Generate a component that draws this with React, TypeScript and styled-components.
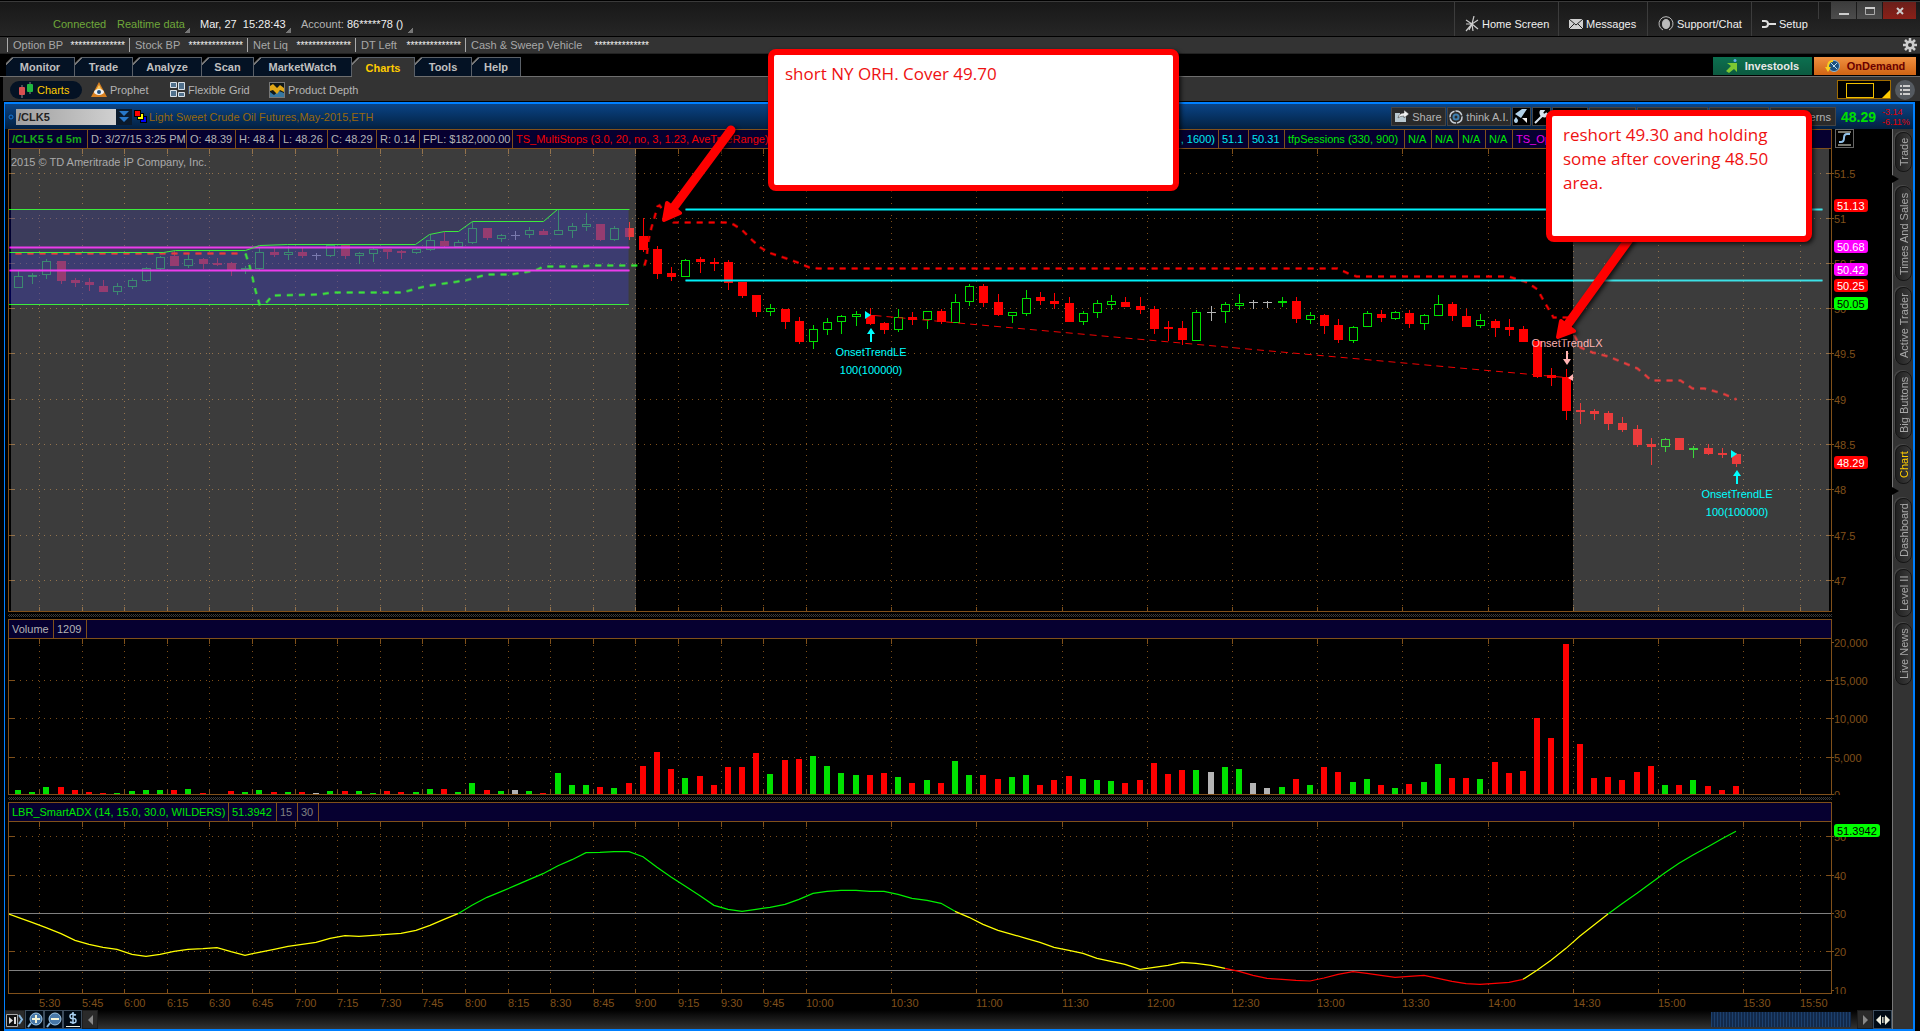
import React, { useLayoutEffect, useRef, useState } from "react";
import styled, { createGlobalStyle, css } from "styled-components";

const BROWN = "#80501a";
const BLUE = "#0080ff";
const SANS = '"Liberation Sans", Arial, sans-serif';

const Global = createGlobalStyle`
  * { box-sizing: border-box; }
  html, body { margin: 0; background: #000; }
  body { font: 11px/14px ${SANS}; color: #b4b4b4; overflow: hidden; }
  button, input { font: inherit; color: inherit; margin: 0; padding: 0; border: 0; background: none; border-radius: 0; }
  svg { display: block; flex: none; }
`;

/* ---------- market data ---------- */

type Kind = "g" | "r" | "w";
type Bar = { kind: Kind; top: number; bottom: number; high: number; low: number };

/* kind, body top, body bottom, high, low; levels are thirds of a unit below the base */
const parseBars = (base: number, text: string): Bar[] =>
  text
    .trim()
    .split(/\s+/)
    .map((item) => {
      const [top, bottom, high, low] = item
        .slice(1)
        .split(",")
        .map((v) => Math.round(base + Number(v) / 3));
      return { kind: item[0] as Kind, top, bottom, high, low };
    });

const bars: Bar[] = [
  ...parseBars(
    190,
    `g258,294,243,294 g255,260,249,282 g213,255,207,267 r213,273,213,282 r269,279,263,291 r276,286,264,303
     r288,306,270,306 g288,306,279,315 g270,291,264,297 g234,273,231,276 g201,237,198,240 r198,228,183,228
     g207,228,190,234 r207,222,203,238 r219,225,204,228 r219,241,216,258 g234,241,228,252 g186,237,170,240
     r186,195,171,201 g186,195,168,210 r186,198,172,204 w196,198,190,210 g165,198,165,201 r165,198,165,207
     g189,198,186,222 g177,192,174,216 r177,186,177,207 r183,189,180,207 g177,189,174,192 g150,180,135,183
     r153,169,126,170 g156,171,150,171 g114,159,96,162 r114,144,114,150 g135,147,132,156 w136,138,123,150
     g120,135,111,144 r123,135,117,135 g120,135,60,135 g108,123,99,144 g102,111,69,123 r102,150,102,153
     g114,150,108,153 r114,141,96,150 r138,180,85,185 r177,252,168,267 r249,262,231,273 g210,261,207,261
     r207,216,202,249 r216,222,204,243 r216,279,210,300 r276,318,276,324 r315,366,315,381 g354,366,342,378
     r357,396,357,417 r393,456,381,462 g417,456,405,477 g396,420,384,435 g378,396,375,432 g372,380,363,408
     r375,402,354,405 r399,420,396,432 g381,420,357,426 r381,390,366,405 g363,390,363,417 r363,396,357,402
     g336,399,312,399 g288,336,282,348 r288,339,282,351 r336,375,312,378 g366,378,366,399 g324,372,300,378
     r321,333,306,345 r333,342,309,357 r339,396,321,396 g369,396,363,405 g339,369,330,384 g333,345,315,360
     r336,351,321,351 r348,360,321,372 r357,417,348,432 r411,417,393,453 r414,450,393,465 g366,452,360,452
     w367,369,348,393 g342,366,336,399`
  ),
  ...parseBars(
    230,
    `g219,228,192,240 w217,219,210,237 w217,219,213,234 g214,218,201,231 r213,267,201,279 g255,270,246,282
     r255,288,252,312 r285,330,267,339 g291,333,288,339 g249,291,243,291 r252,264,240,276 g246,267,243,270
     r249,282,240,294 g255,282,252,300 g222,258,195,258 r222,258,216,273 r258,291,237,291 g270,288,252,294
     r273,294,267,321 r291,300,267,318 r297,336,288,336 r333,441,333,444 r435,444,414,468 r441,543,417,570
     r540,546,519,582 r543,552,537,570 r549,582,543,600 r579,600,561,606 r597,645,585,651 r642,651,624,705
     g627,651,624,666 r624,660,624,660 g654,660,648,684 r654,672,642,675 r669,675,654,684 r672,702,669,711`
  ),
];

/* bar heights, thirds of a unit */
const volumes = [
  13, 7, 22, 22, 13, 7, 4, 4, 10, 13, 13, 13, 16, 4, 0, 10, 7, 13, 7, 7, 7, 4, 10, 10, 10, 4, 10, 7, 7, 16, 16, 7, 34,
  13, 10, 13, 10, 4, 64, 28, 28, 22, 19, 34, 85, 127, 76, 49, 55, 28, 82, 82, 124, 61, 103, 106, 115, 85, 64, 58, 58,
  64, 52, 34, 43, 34, 100, 58, 58, 46, 52, 58, 28, 43, 55, 46, 43, 40, 34, 43, 94, 61, 73, 73, 67, 82, 76, 34, 19, 22,
  46, 28, 82, 67, 37, 46, 28, 19, 31, 37, 91, 49, 49, 46, 97, 64, 70, 229, 169, 451, 151, 49, 52, 43, 67, 85, 28, 28,
  43, 25, 13, 25,
];

/* thirds of a unit below 600 */
const adx = [
  952, 967, 983, 1001, 1021, 1033, 1042, 1048, 1063, 1069, 1063, 1054, 1048, 1046, 1043, 1055, 1066, 1057, 1048, 1039,
  1033, 1027, 1015, 1007, 1009, 1006, 1003, 1000, 991, 976, 958, 941, 916, 892, 875, 857, 839, 821, 797, 779, 758, 757,
  755, 755, 770, 802, 831, 858, 887, 916, 928, 934, 928, 922, 913, 898, 880, 874, 871, 871, 874, 874, 883, 895, 901,
  910, 934, 952, 973, 991, 1003, 1015, 1027, 1042, 1051, 1060, 1075, 1084, 1093, 1108, 1102, 1096, 1087, 1090, 1096,
  1105, 1114, 1126, 1135, 1138, 1141, 1143, 1134, 1123, 1115, 1120, 1126, 1132, 1129, 1126, 1135, 1144, 1151, 1153,
  1150, 1147, 1138, 1111, 1081, 1045, 1008, 975, 942, 911, 880, 849, 818, 790, 765, 740, 716, 694,
];

const barX = (i: number) => Math.round(18 + i * 14.198);

const times: [number, string][] = [
  [39, "5:30"], [82, "5:45"], [124, "6:00"], [167, "6:15"], [209, "6:30"], [252, "6:45"], [295, "7:00"], [337, "7:15"],
  [380, "7:30"], [422, "7:45"], [465, "8:00"], [508, "8:15"], [550, "8:30"], [593, "8:45"], [635, "9:00"], [678, "9:15"],
  [721, "9:30"], [763, "9:45"], [806, "10:00"], [891, "10:30"], [976, "11:00"], [1062, "11:30"], [1147, "12:00"],
  [1232, "12:30"], [1317, "13:00"], [1402, "13:30"], [1488, "14:00"], [1573, "14:30"], [1658, "15:00"], [1743, "15:30"],
  [1800, "15:50"],
];

const prices: [number, string][] = [
  [173, "51.5"], [218, "51"], [263, "50.5"], [308, "50"], [353, "49.5"], [399, "49"], [444, "48.5"], [489, "48"],
  [535, "47.5"], [580, "47"],
];
const volumeLevels: [number, string][] = [[642, "20,000"], [680, "15,000"], [718, "10,000"], [757, "5,000"], [794, "0"]];
const adxLevels: [number, string][] = [[836, "50"], [875, "40"], [913, "30"], [951, "20"], [990, "10"]];

/* ---------- plot plumbing ---------- */

type Scale = { w: number; h: number; X: (v: number) => number; Y: (v: number) => number };
type Domain = { x: number; y: number; w: number; h: number };

const Measured = styled.div`
  min-width: 0;
  min-height: 0;
  overflow: hidden;
`;

function Plot({ domain, label, children }: { domain: Domain; label: string; children: (s: Scale) => React.ReactNode }) {
  const ref = useRef<HTMLDivElement>(null);
  const [size, setSize] = useState({ w: domain.w, h: domain.h });
  useLayoutEffect(() => {
    const el = ref.current!;
    const measure = () => setSize({ w: el.clientWidth, h: el.clientHeight });
    measure();
    const ro = new ResizeObserver(measure);
    ro.observe(el);
    return () => ro.disconnect();
  }, []);
  const X = (v: number) => ((v - domain.x) * size.w) / domain.w;
  const Y = (v: number) => ((v - domain.y) * size.h) / domain.h;
  return (
    <Measured ref={ref}>
      <svg width={size.w} height={size.h} role="img" aria-label={label} fontFamily={SANS} fontSize={11}>
        {children({ ...size, X, Y })}
      </svg>
    </Measured>
  );
}

function Grid({ s, rows }: { s: Scale; rows: number[] }) {
  return (
    <g stroke={BROWN} shapeRendering="crispEdges">
      {times.map(([x]) => (
        <React.Fragment key={x}>
          <line x1={s.X(x) + 0.5} x2={s.X(x) + 0.5} y1={6} y2={s.h} strokeDasharray="1 5" />
          <line x1={s.X(x) + 0.5} x2={s.X(x) + 0.5} y1={0} y2={5} />
          <line x1={s.X(x) + 0.5} x2={s.X(x) + 0.5} y1={s.h - 4} y2={s.h} />
        </React.Fragment>
      ))}
      {rows.map((y) => (
        <React.Fragment key={y}>
          <line x1={5} x2={s.w} y1={s.Y(y) + 0.5} y2={s.Y(y) + 0.5} strokeDasharray="1 5" />
          <line x1={0} x2={5} y1={s.Y(y) + 0.5} y2={s.Y(y) + 0.5} />
          <line x1={s.w - 4} x2={s.w} y1={s.Y(y) + 0.5} y2={s.Y(y) + 0.5} />
        </React.Fragment>
      ))}
    </g>
  );
}

const points = (s: Scale, list: number[][], shift = 0) =>
  list.map(([x, y]) => `${s.X(x) + shift},${s.Y(y) + shift}`).join(" ");

function Glow({ s, list, color, dash }: { s: Scale; list: number[][]; color: string; dash?: string }) {
  const p = points(s, list, 0.5);
  return (
    <g fill="none" stroke={color} strokeDasharray={dash}>
      <polyline points={p} strokeWidth={3} opacity={0.5} />
      <polyline points={p} strokeWidth={dash ? 1.5 : 1} />
    </g>
  );
}

const kindColor: Record<Kind, string> = { g: "#00e000", r: "#ff0000", w: "#b4b4b4" };

const rangeTop = [
  [9, 252], [163, 252], [175, 250], [245, 250], [259, 245], [287, 244], [415, 244], [429, 234], [444, 231], [458, 231],
  [472, 221], [543, 221], [557, 209], [629, 209],
];
const greenStop = [
  [245, 253], [249, 265], [252, 277], [255, 290], [259, 304], [265, 303], [272, 295], [320, 294], [331, 292], [402, 292],
  [416, 288], [429, 285], [444, 283], [465, 280], [486, 274], [510, 274], [535, 270], [543, 266], [580, 266], [592, 265],
  [643, 265],
];
const redStop = [
  [644, 265], [646, 258], [648, 240], [651, 227], [654, 217], [657, 206], [659, 205], [663, 210], [673, 222], [725, 222],
  [733, 224], [741, 229], [752, 240], [760, 247], [768, 252], [786, 258], [797, 262], [809, 267], [818, 268], [1337, 268],
  [1348, 273], [1356, 276], [1508, 276], [1527, 282], [1537, 289], [1543, 300], [1549, 310], [1553, 317], [1567, 317],
  [1573, 333], [1580, 347], [1592, 352], [1608, 356], [1637, 368], [1651, 380], [1680, 380], [1692, 388], [1704, 388],
  [1722, 393], [1736, 399],
];

const Watermark = styled.text`
  fill: #a0a0a0;
`;

function Signal({ s, x, y, color, down, lines }: { s: Scale; x: number; y: number; color: string; down?: boolean; lines: [number, string][] }) {
  const cx = s.X(x);
  const cy = s.Y(y);
  return (
    <g fill={color} textAnchor="middle">
      <path d={down ? `M${cx - 1} ${cy}h2v8h3l-4 6l-4-6h3z` : `M${cx} ${cy}l4 6h-3v8h-2v-8h-3z`} />
      {lines.map(([ly, t]) => (
        <text key={t} x={cx} y={s.Y(ly)}>
          {t}
        </text>
      ))}
    </g>
  );
}

function PricePlot() {
  return (
    <Plot domain={{ x: 9, y: 149, w: 1822, h: 462 }} label="Price">
      {(s) => (
        <>
          <Grid s={s} rows={prices.map(([y]) => y)} />
          <Watermark x={2} y={17}>
            2015 © TD Ameritrade IP Company, Inc.
          </Watermark>
          <g shapeRendering="crispEdges">
            {bars.map((b, i) => {
              const x = s.X(barX(i));
              const top = s.Y(b.top);
              const h = Math.max(1, s.Y(b.bottom) - top);
              const c = kindColor[b.kind];
              return (
                <g key={i} fill={c}>
                  <rect x={x} y={s.Y(b.high)} width={1} height={Math.max(1, s.Y(b.low) - s.Y(b.high))} />
                  {b.kind === "g" ? (
                    <rect x={x - 4 + 0.5} y={top + 0.5} width={8} height={Math.max(1, h - 1)} fill="#000" stroke={c} />
                  ) : (
                    <rect x={x - 4} y={top} width={9} height={b.kind === "w" ? 1 : Math.max(2, h)} />
                  )}
                </g>
              );
            })}
          </g>
          <rect x={0} y={s.Y(209)} width={s.X(628)} height={s.Y(304) - s.Y(209)} fill="#00009b" opacity={0.3} />
          <polygon points={`${points(s, rangeTop)} ${points(s, [[629, 304], [9, 304]])}`} fill="#00009b" opacity={0.27} />
          <polyline
            points={points(s, [[874, 315], [1565, 377]], 0.5)}
            stroke="#f00000"
            strokeDasharray="7 5"
            fill="none"
          />
          <Glow s={s} list={[[15, 253], [241, 253]]} color="#ff0000" dash="6 6" />
          <Glow s={s} list={greenStop} color="#00f000" dash="6 6" />
          <Glow s={s} list={redStop} color="#f80000" dash="6 6" />
          <Glow s={s} list={[[9, 247], [629, 247]]} color="#ff00ff" />
          <Glow s={s} list={[[9, 270], [629, 270]]} color="#ff00ff" />
          <Glow s={s} list={[[685, 209], [1822, 209]]} color="#00f0f8" />
          <Glow s={s} list={[[685, 280], [1822, 280]]} color="#00f0f8" />
          <polyline points={points(s, rangeTop, 0.5)} fill="none" stroke="#00ff00" />
          <g fill="#00ff00" shapeRendering="crispEdges">
            <rect x={0} y={s.Y(209)} width={s.X(629)} height={1} />
            <rect x={0} y={s.Y(304)} width={s.X(629)} height={1} />
          </g>
          <g fill="rgba(191,191,191,.314)" shapeRendering="crispEdges">
            <rect x={s.X(11)} y={0} width={s.X(636) - s.X(11)} height={s.h} />
            <rect x={s.X(1573)} y={0} width={s.X(1829) - s.X(1573)} height={s.h} />
          </g>
          <path d={`M${s.X(865)} ${s.Y(311)}l6 4l-6 4z`} fill="#00ffff" />
          <path d={`M${s.X(1731)} ${s.Y(450)}l6 4l-6 4z`} fill="#00ffff" />
          <path d={`M${s.X(1573)} ${s.Y(374)}v7l-5-3z`} fill="#ffb4b4" />
          <Signal s={s} x={871} y={328} color="#00ffff" lines={[[356, "OnsetTrendLE"], [374, "100(100000)"]]} />
          <Signal s={s} x={1737} y={470} color="#00ffff" lines={[[498, "OnsetTrendLE"], [516, "100(100000)"]]} />
          <Signal s={s} x={1567} y={351} color="#ffb4b4" down lines={[[347, "OnsetTrendLX"]]} />
        </>
      )}
    </Plot>
  );
}

function VolumePlot() {
  return (
    <Plot domain={{ x: 9, y: 639, w: 1822, h: 155 }} label="Volume">
      {(s) => (
        <>
          <Grid s={s} rows={[680, 718, 757]} />
          <g shapeRendering="crispEdges">
            {volumes.map((v, i) => {
              const h = (Math.round(v / 3) * s.h) / 155;
              return <rect key={i} x={s.X(barX(i)) - 3} y={s.h - h} width={6} height={h} fill={kindColor[bars[i].kind]} />;
            })}
          </g>
        </>
      )}
    </Plot>
  );
}

function AdxPlot() {
  const all = adx.map((v, i) => [barX(i), 600 + v / 3]);
  const run = (a: number, b: number) => all.slice(a, b + 1);
  return (
    <Plot domain={{ x: 9, y: 822, w: 1822, h: 171 }} label="LBR SmartADX">
      {(s) => (
        <>
          <Grid s={s} rows={[836, 875, 951]} />
          <g fill="#808080" shapeRendering="crispEdges">
            <rect x={0} y={s.Y(913)} width={s.w} height={1} />
            <rect x={0} y={s.Y(970)} width={s.w} height={1} />
          </g>
          <g fill="none" strokeWidth={1.2}>
            <polyline points={points(s, [[9, 914], ...run(0, 31)])} stroke="#ffff00" />
            <polyline points={points(s, run(31, 66))} stroke="#00f000" />
            <polyline points={points(s, run(66, 85))} stroke="#ffff00" />
            <polyline points={points(s, run(85, 106))} stroke="#ff0000" />
            <polyline points={points(s, run(106, 112))} stroke="#ffff00" />
            <polyline points={points(s, run(112, 121))} stroke="#00f000" />
          </g>
        </>
      )}
    </Plot>
  );
}

type Badge = { y: number; text: string; color: string; dark?: boolean };

function AxisPlot({ y, h, labels, badges = [] }: { y: number; h: number; labels: [number, string][]; badges?: Badge[] }) {
  return (
    <Plot domain={{ x: 1832, y, w: 60, h }} label="Scale">
      {(s) => (
        <>
          {labels.map(([ly, t]) => (
            <g key={t} fill={BROWN}>
              <rect x={0} y={s.Y(ly)} width={2} height={1} />
              <text x={2} y={s.Y(ly) + 5}>
                {t}
              </text>
            </g>
          ))}
          {badges.map((b) => (
            <g key={b.text}>
              <rect x={2} y={s.Y(b.y) - 7} width={b.text.length > 5 ? 46 : 34} height={13} rx={3} fill={b.color} />
              <text x={5} y={s.Y(b.y) + 4} fill={b.dark ? "#000" : "#fff"}>
                {b.text}
              </text>
            </g>
          ))}
        </>
      )}
    </Plot>
  );
}

/* ---------- page frame ---------- */

const Page = styled.div`
  position: relative;
  display: flex;
  flex-direction: column;
  height: 100vh;
  min-height: 700px;
  background: #000;
`;

const TitleBar = styled.header`
  display: flex;
  justify-content: space-between;
  height: 36px;
  flex: none;
  margin-top: 1px;
  padding: 0 4px 0 53px;
  border-top: 1px solid #3a3a3a;
  border-bottom: 1px solid #000;
  background: linear-gradient(#181818, #262626);
`;

const Status = styled.div`
  display: flex;
  align-items: center;
  padding-top: 10px;
`;

const StatusText = styled.span<{ $color: string; $w: number }>`
  width: ${(p) => p.$w}px;
  color: ${(p) => p.$color};
  white-space: nowrap;
`;

const Corner = styled.i`
  width: 5px;
  height: 5px;
  margin: 12px 10px 0 2px;
  background: linear-gradient(135deg, transparent 50%, #777 50%);
`;

const TitleRight = styled.div`
  display: flex;
  align-items: flex-start;
`;

const TitleLink = styled.button<{ $w: number }>`
  display: flex;
  align-items: center;
  gap: 3px;
  width: ${(p) => p.$w}px;
  height: 34px;
  padding: 10px 0 0 10px;
  border-left: 1px solid #3c3c3c;
  color: #f0f0f0;
  white-space: nowrap;
`;

const WindowButtons = styled.div`
  display: flex;
  gap: 1px;
  padding-left: 12px;
  border-left: 1px solid #3c3c3c;
`;

const WindowButton = styled.button<{ $close?: boolean }>`
  display: grid;
  place-items: center;
  width: ${(p) => (p.$close ? 33 : 25)}px;
  height: 17px;
  background: ${(p) => (p.$close ? "linear-gradient(#6a1f1a,#8a2018)" : "linear-gradient(#3c3c3c,#4c4c4c)")};
`;

const AccountBar = styled.div`
  display: flex;
  align-items: center;
  height: 17px;
  flex: none;
  padding: 0 3px 0 7px;
  background: #333;
  border-bottom: 1px solid #222;
`;

const AccountItem = styled.div<{ $w: number }>`
  display: flex;
  justify-content: space-between;
  width: ${(p) => p.$w}px;
  height: 14px;
  padding: 0 4px 0 5px;
  border-left: 1px solid #aaa;
  color: #a8a8a8;
  white-space: nowrap;
`;

const Stars = styled.span`
  font-size: 10px;
  line-height: 16px;
  color: #f0f0f0;
`;

const IconButton = styled.button`
  display: grid;
  place-items: center;
`;

const Push = styled.div`
  flex: 1;
`;

const TabRow = styled.nav`
  display: flex;
  align-items: flex-end;
  height: 23px;
  flex: none;
  padding: 0 4px 0 6px;
  border-bottom: 1px solid #6e6e6e;
`;

const Tab = styled.button<{ $w: number; $active?: boolean }>`
  width: ${(p) => p.$w}px;
  height: ${(p) => (p.$active ? 20 : 19)}px;
  margin-bottom: ${(p) => (p.$active ? -1 : 0)}px;
  border-top: 1px solid #5a6068;
  border-right: 1px solid #5a6068;
  background: linear-gradient(135deg, #777 5px, ${(p) => (p.$active ? "#333" : "#041224")} 5px);
  clip-path: polygon(6px 0, 100% 0, 100% 100%, 0 100%, 0 6px);
  color: ${(p) => (p.$active ? "#ffcc00" : "#c0c0c0")};
  font-weight: bold;
  text-align: center;
`;

const Promo = styled.button<{ $w: number; $orange?: boolean }>`
  display: flex;
  align-items: center;
  justify-content: center;
  gap: 7px;
  width: ${(p) => p.$w}px;
  height: 18px;
  margin: 0 0 1px 2px;
  font-weight: bold;
  ${(p) =>
    p.$orange
      ? css`
          color: #6a0000;
          background: linear-gradient(#f09040, #d06414);
        `
      : css`
          color: #e8e8e8;
          background: linear-gradient(#0c7050, #0c5a40);
        `}
`;

const SubNav = styled.nav`
  display: flex;
  align-items: center;
  height: 25px;
  flex: none;
  margin-left: 3px;
  padding: 1px 5px 0 7px;
  background: #333;
  border-bottom: 1px solid #000;
`;

const SubLink = styled.button<{ $w: number; $active?: boolean }>`
  display: flex;
  align-items: center;
  gap: 3px;
  width: ${(p) => p.$w}px;
  height: 18px;
  padding-left: 9px;
  border-radius: 9px;
  background: ${(p) => (p.$active ? "#041224" : "none")};
  color: ${(p) => (p.$active ? "#ffcc00" : "#b4b4b4")};
  white-space: nowrap;
`;

const LayoutButton = styled.button`
  width: 54px;
  height: 19px;
  border: 1px solid #a06c00;
  background: #000;
`;

const ListButton = styled.button`
  display: grid;
  place-items: center;
  width: 20px;
  height: 20px;
  margin-left: 4px;
  border-radius: 50%;
  background: #555a60;
`;

const Workspace = styled.main`
  display: flex;
  flex-direction: column;
  flex: 1;
  min-height: 0;
  margin: 0 5px 0 4px;
  border: solid ${BLUE};
  border-width: 2px 2px 2px 1px;
`;

const SymbolBar = styled.div`
  display: flex;
  align-items: center;
  height: 25px;
  flex: none;
  padding-left: 3px;
  background: linear-gradient(#0a4486, #032040);
`;

const SymbolInput = styled.input`
  width: 100px;
  height: 16px;
  padding-left: 2px;
  background: linear-gradient(90deg, #a0a0a0, #d0d0d0);
  color: #222;
  font-weight: bold;
`;

const DropButton = styled.button`
  display: grid;
  place-items: center;
  width: 16px;
  height: 16px;
  margin-right: 2px;
  background: #0a1a2c;
`;

const SymbolName = styled.h1`
  margin: 0 0 0 2px;
  color: #98680c;
  font: inherit;
  white-space: nowrap;
`;

const Tool = styled.button<{ $w: number; $dark?: boolean }>`
  display: flex;
  align-items: center;
  justify-content: center;
  gap: 3px;
  width: ${(p) => p.$w}px;
  height: 19px;
  margin-left: 1px;
  border: 1px solid #444;
  background: ${(p) => (p.$dark ? "#000" : "#2a2a2a")};
  color: #b4b4b4;
  white-space: nowrap;
`;

const LastPrice = styled.strong`
  margin-left: 5px;
  color: #00e000;
  font-size: 14px;
`;

const Change = styled.span`
  width: 30px;
  margin: 0 1px 0 6px;
  color: #e00000;
  font-size: 9px;
  line-height: 10px;
`;

const Body = styled.div`
  display: flex;
  flex: 1;
  min-height: 0;
`;

const Charts = styled.div`
  display: flex;
  flex-direction: column;
  flex: 1;
  min-width: 0;
  padding-left: 3px;
`;

const Panel = styled.section<{ $grow: number }>`
  display: grid;
  grid-template: 20px minmax(0, 1fr) / minmax(0, 1fr) 60px;
  flex: ${(p) => p.$grow} 1 ${(p) => p.$grow}px;
  min-height: 0;
`;

const PanelHead = styled.div`
  display: flex;
  overflow: hidden;
  border: 1px solid ${BROWN};
  background: #060030;
`;

const Cell = styled.span<{ $w?: number; $color?: string; $bold?: boolean; $end?: boolean }>`
  width: ${(p) => (p.$w ? `${p.$w}px` : "auto")};
  flex: ${(p) => (p.$w ? "none" : "1")};
  padding: 2px 3px;
  border-right: ${(p) => (p.$w ? `1px solid ${BROWN}` : "0")};
  color: ${(p) => p.$color || "#b4b4b4"};
  font-weight: ${(p) => (p.$bold ? "bold" : "normal")};
  text-align: ${(p) => (p.$end ? "right" : "left")};
  white-space: nowrap;
`;

const Frame = styled.div`
  display: grid;
  min-height: 0;
  border: solid ${BROWN};
  border-width: 0 1px 1px;
`;

const AxisCell = styled.div`
  display: grid;
  min-height: 0;
`;

const FitButton = styled.button`
  display: grid;
  place-items: center;
  width: 19px;
  height: 19px;
  margin-left: 3px;
  border: 1px solid #666;
`;

const Splitter = styled.div`
  height: 7px;
  flex: none;
  margin: 0 60px 0 0;
  padding: 2px 0;
  background: repeating-conic-gradient(#3a3a3a 0 25%, #000 0 50%) 0 0 / 2px 2px content-box;
`;

const TimeAxis = styled.div`
  display: grid;
  height: 16px;
  flex: none;
  margin: 0 61px 0 1px;
`;

const BottomBar = styled.div`
  display: flex;
  height: 19px;
  flex: none;
  margin-left: -3px;
  background: linear-gradient(#000, #333);
`;

const BottomButton = styled.button<{ $w: number; $line?: boolean }>`
  display: grid;
  place-items: center;
  width: ${(p) => p.$w}px;
  height: 19px;
  flex: none;
  border: 1px solid ${(p) => (p.$line ? "#3c4c5c" : "#1c1c1c")};
  background: ${(p) => (p.$line ? "#000a14" : "#2a2a2a")};
`;

const Track = styled.div`
  display: flex;
  justify-content: flex-end;
  flex: 1;
  padding: 2px 6px 2px 0;
`;

const Thumb = styled.div`
  width: 140px;
  background: repeating-linear-gradient(90deg, #1c406e 0 1px, #12294a 1px 3px);
`;

const SideBar = styled.aside`
  display: flex;
  flex-direction: column;
  align-items: center;
  gap: 6px;
  width: 21px;
  flex: none;
  padding-top: 3px;
  border-left: 1px solid #777;
  background: #333;
`;

const SideTab = styled.button<{ $h: number; $active?: boolean; $gap?: boolean }>`
  width: 17px;
  height: ${(p) => p.$h}px;
  flex: none;
  border: 1px solid #161616;
  border-radius: 8px;
  background: linear-gradient(90deg, #3c3c3c, #202020);
  box-shadow: 1px 1px 0 #484848;
  color: ${(p) => (p.$active ? "#ffcc00" : "#a8a8a8")};
  line-height: 14px;
  writing-mode: vertical-rl;
  rotate: 180deg;
  white-space: nowrap;
  text-align: center;
`;

const Notch = styled.i`
  align-self: flex-start;
  width: 7px;
  height: 8px;
  margin: -3px 0 -3px -1px;
  background: #000;
  clip-path: polygon(0 0, 100% 50%, 0 100%);
`;

const Note = styled.div<{ $x: number; $y: number; $w: number; $h: number }>`
  position: absolute;
  left: ${(p) => p.$x}px;
  top: ${(p) => p.$y}px;
  width: ${(p) => p.$w}px;
  height: ${(p) => p.$h}px;
  padding: 7px 11px;
  border: 6px solid #ff0000;
  border-radius: 8px;
  background: #fff;
  box-shadow: 2px 2px 4px rgba(0, 0, 0, 0.7);
  color: #ee1111;
  font: 17px/24px "Open Sans", "Noto Sans", sans-serif;
`;

const Arrows = styled.svg`
  position: absolute;
  left: 0;
  top: 0;
  pointer-events: none;
  filter: drop-shadow(2px 2px 2px rgba(0, 0, 0, 0.7));
`;

const accounts: [string, number][] = [
  ["Option BP", 122], ["Stock BP", 118], ["Net Liq", 108], ["DT Left", 110], ["Cash & Sweep Vehicle", 188],
];
const tabs: [string, number][] = [
  ["Monitor", 69], ["Trade", 58], ["Analyze", 69], ["Scan", 52], ["MarketWatch", 98], ["Charts", 63], ["Tools", 57], ["Help", 49],
];
const sideTabs: [string, number, boolean?][] = [
  ["Trade", 40, true], ["Times And Sales", 95], ["Active Trader", 78], ["Big Buttons", 68], ["Chart", 39, true],
  ["Dashboard", 65], ["Level II", 48], ["Live News", 62],
];

const Zoom = ({ plus }: { plus?: boolean }) => (
  <svg width="16" height="16" viewBox="0 0 16 16">
    <path d="M4 11L1 15" stroke="#88b8e0" strokeWidth="2" />
    <circle cx="9" cy="7" r="6" fill="#4878a8" stroke="#a0c8e8" />
    <path d={plus ? "M5 7h8M9 3v8" : "M5 7h8"} stroke="#f4f4d8" strokeWidth="2" />
  </svg>
);

export default function App() {
  return (
    <>
      <Global />
      <Page>
        <TitleBar>
          <Status>
            <StatusText $color="#6fa83a" $w={64}>Connected</StatusText>
            <StatusText $color="#6fa83a" $w={66}>Realtime data</StatusText>
            <Corner />
            <StatusText $color="#f0f0f0" $w={84}>Mar, 27&nbsp; 15:28:43</StatusText>
            <Corner />
            <StatusText $color="#b4b4b4" $w={46}>Account:</StatusText>
            <StatusText $color="#f0f0f0" $w={59}>86*****78 ()</StatusText>
            <Corner />
          </Status>
          <TitleRight>
            <TitleLink $w={104}>
              <svg width="14" height="16" viewBox="0 0 14 16" stroke="#ccc" strokeWidth="1.2">
                <path d="M9 0L7 8L13 4M7 8L1 4M7 8L1 15M7 8L8 15M7 8L13 13M7 8H1M7 8L4 14" fill="none" />
              </svg>
              Home Screen
            </TitleLink>
            <TitleLink $w={89}>
              <svg width="14" height="10" viewBox="0 0 14 10">
                <path d="M0 0H14V10H0z" fill="#d0d0d0" />
                <path d="M0 0L7 6L14 0M0 10L5 5M14 10L9 5" stroke="#222" fill="none" />
              </svg>
              Messages
            </TitleLink>
            <TitleLink $w={104}>
              <svg width="16" height="16" viewBox="0 0 16 16" fill="none" stroke="#bbb">
                <ellipse cx="8" cy="8" rx="3.500" ry="4.500" fill="#bbb" />
                <path d="M5 14A7 7 0 1 1 11 14" />
              </svg>
              Support/Chat
            </TitleLink>
            <TitleLink $w={67}>
              <svg width="14" height="8" viewBox="0 0 14 8" fill="none" stroke="#ddd" strokeWidth="2">
                <path d="M0 1h3q3 0 3 3t-3 3H0M6 4h8" />
              </svg>
              Setup
            </TitleLink>
            <WindowButtons>
              <WindowButton aria-label="Minimize">
                <svg width="10" height="8"><path d="M0 6h10v2H0z" fill="#ccc" /></svg>
              </WindowButton>
              <WindowButton aria-label="Maximize">
                <svg width="10" height="8"><path d="M.5 1.5h9v6h-9z" fill="none" stroke="#aaa" /><path d="M0 0h10v2H0z" fill="#ccc" /></svg>
              </WindowButton>
              <WindowButton aria-label="Close" $close>
                <svg width="8" height="8"><path d="M1 1l6 6M7 1l-6 6" stroke="#ccc" strokeWidth="2" /></svg>
              </WindowButton>
            </WindowButtons>
          </TitleRight>
        </TitleBar>

        <AccountBar>
          {accounts.map(([name, w]) => (
            <AccountItem key={name} $w={w}>
              {name} <Stars>**************</Stars>
            </AccountItem>
          ))}
          <Push />
          <IconButton aria-label="Settings">
            <svg width="14" height="14" viewBox="0 0 14 14">
              <g stroke="#ccc" strokeWidth="2.500"><path d="M7 0v14M0 7h14M2 2l10 10M12 2L2 12" /></g>
              <circle cx="7" cy="7" r="4.500" fill="#ccc" />
              <circle cx="7" cy="7" r="2" fill="#333" />
            </svg>
          </IconButton>
        </AccountBar>

        <TabRow>
          {tabs.map(([name, w]) => (
            <Tab key={name} $w={w} $active={name === "Charts"}>{name}</Tab>
          ))}
          <Push />
          <Promo $w={99}>
            <svg width="12" height="14" viewBox="0 0 12 14">
              <path d="M1 4h10v9L8 10L3 14L0 12L5 7z" fill="#7cc832" />
              <circle cx="9" cy="1.500" r="1.500" fill="#60b0f0" />
            </svg>
            Investools
          </Promo>
          <Promo $w={102} $orange>
            <svg width="15" height="14" viewBox="0 0 15 14">
              <circle cx="9" cy="7" r="5.500" fill="#1c5080" stroke="#90b8d0" />
              <path d="M6 4l6 6M12 4L8 8" stroke="#c0e0f0" />
              <path d="M8 2Q3 2 3 8" stroke="#f8d020" strokeWidth="2" fill="none" />
              <path d="M0 8h6l-3 5z" fill="#f8d020" />
            </svg>
            OnDemand
          </Promo>
        </TabRow>

        <SubNav>
          <SubLink $w={72} $active>
            <svg width="15" height="16" viewBox="0 0 15 16">
              <path d="M3 3v13M11 0v12" stroke="#888" />
              <rect x="0" y="5" width="6" height="8" rx="1" fill="#d85050" />
              <rect x="8" y="2" width="6" height="8" rx="1" fill="#20b840" />
            </svg>
            Charts
          </SubLink>
          <SubLink $w={79}>
            <svg width="16" height="16" viewBox="0 0 16 16">
              <path d="M8 0L16 15H0z" fill="#d88020" />
              <path d="M8 3l3 5H5z" fill="#f8c860" />
              <ellipse cx="8" cy="10" rx="5" ry="3" fill="#f0f0f0" />
              <circle cx="8" cy="10" r="2" fill="#205080" />
            </svg>
            Prophet
          </SubLink>
          <SubLink $w={99}>
            <svg width="15" height="15" viewBox="0 0 15 15" fill="#50708c" stroke="#d8e0e8">
              <path d="M.5.5h6v5h-6zM.5 8.5h6v6h-6zM8.5.5h6v7h-6zM8.5 10.5h6v4h-6z" />
            </svg>
            Flexible Grid
          </SubLink>
          <SubLink $w={110}>
            <svg width="16" height="16" viewBox="0 0 16 16">
              <rect x=".5" y=".5" width="15" height="15" fill="#101818" stroke="#777" />
              <path d="M1 10l4 3l5-4l5 2v4H1z" fill="#3878a0" />
              <path d="M1 4l3-2l4 4l3-3l4 3v4l-4-2l-3 4l-4-4l-3 1z" fill="#e0a818" />
            </svg>
            Product Depth
          </SubLink>
          <Push />
          <LayoutButton aria-label="Grid layout">
            <svg width="52" height="17" viewBox="0 0 52 17">
              <rect x="8.500" y="2.500" width="27" height="14" fill="none" stroke="#f0c000" />
              <path d="M52 9v8h-8z" fill="#ffcc00" />
            </svg>
          </LayoutButton>
          <ListButton aria-label="List">
            <svg width="10" height="10" viewBox="0 0 10 10" fill="#ccc">
              <path d="M0 0h2v2H0zM3 0h7v2H3zM0 4h2v2H0zM3 4h7v2H3zM0 8h2v2H0zM3 8h7v2H3z" />
            </svg>
          </ListButton>
        </SubNav>

        <Workspace>
          <SymbolBar>
            <svg width="8" height="8" viewBox="0 0 8 8"><circle cx="3" cy="4" r="2" fill="none" stroke="#1878d8" /></svg>
            <SymbolInput aria-label="Symbol" defaultValue="/CLK5" />
            <DropButton aria-label="Choose symbol">
              <svg width="10" height="12" viewBox="0 0 10 12" fill="#2878c8"><path d="M0 0h10L5 5zM0 6h10l-5 5z" /></svg>
            </DropButton>
            <svg width="13" height="13" viewBox="0 0 13 13" stroke="#000">
              <rect x="6.500" y="6.500" width="6" height="6" fill="#00f" />
              <rect x="3.500" y="3.500" width="6" height="6" fill="#ff0" />
              <rect x=".5" y=".5" width="6" height="6" fill="#f00" />
            </svg>
            <SymbolName>Light Sweet Crude Oil Futures,May-2015,ETH</SymbolName>
            <Push />
            <Tool $w={55}>
              <svg width="14" height="14" viewBox="0 0 14 14">
                <path d="M0 3h5v2H11v7H0z" fill="#b8c8d0" />
                <path d="M3 8Q4 3 9 3V0l5 4l-5 4V6Q5 6 3 8z" fill="#f0f0f0" stroke="#333" strokeWidth=".5" />
              </svg>
              Share
            </Tool>
            <Tool $w={64}>
              <svg width="14" height="14" viewBox="0 0 14 14" fill="none" stroke="#c8d0d8">
                <circle cx="7" cy="7" r="6" strokeDasharray="8 1" strokeWidth="1.500" />
                <circle cx="7" cy="7" r="2.500" stroke="#4080b0" strokeWidth="2" />
              </svg>
              think A.I.
            </Tool>
            <Tool $w={19} $dark aria-label="Alerts">
              <svg width="14" height="15" viewBox="0 0 14 15"><path d="M1 5L8 0h5L7 9L4 7zM2 8l2 3q0 3-2 3t-2-3z" fill="#b0d0e8" /><path d="M8 9h5v5z" fill="#eee" /></svg>
            </Tool>
            <Tool $w={19} $dark aria-label="Chart settings">
              <svg width="14" height="14" viewBox="0 0 14 14"><path d="M1 13L8 6M13 3l-3 2l-2-2l2-3q-5 0-3 5q5 4 6-2" stroke="#d8e4f0" strokeWidth="2" fill="none" /></svg>
            </Tool>
            <Tool $w={36} $dark aria-label="Time frame" />
            <Tool $w={47} aria-label="Style" />
            <Tool $w={71} aria-label="Drawings" />
            <Tool $w={60} aria-label="Studies" />
            <Tool $w={66}>
              <svg width="12" height="12" viewBox="0 0 12 12"><path d="M0 10l4-8l3 6l5-7" stroke="#ccc" fill="none" /></svg>
              Patterns
            </Tool>
            <LastPrice>48.29</LastPrice>
            <Change>-3.14<br />-6.11%</Change>
          </SymbolBar>

          <Body>
            <Charts>
              <Panel $grow={483}>
                <PanelHead>
                  <Cell $w={79} $color="#18a818" $bold>/CLK5 5 d 5m</Cell>
                  <Cell $w={99}>D: 3/27/15 3:25 PM</Cell>
                  <Cell $w={49}>O: 48.39</Cell>
                  <Cell $w={44}>H: 48.4</Cell>
                  <Cell $w={48}>L: 48.26</Cell>
                  <Cell $w={49}>C: 48.29</Cell>
                  <Cell $w={43}>R: 0.14</Cell>
                  <Cell $w={93}>FPL: $182,000.00</Cell>
                  <Cell $w={262} $color="#f00000">TS_MultiStops (3.0, 20, no, 3, 1.23, AveTrueRange)</Cell>
                  <Cell $w={444} $color="#00e8f0" $end>, 1600)</Cell>
                  <Cell $w={30} $color="#00e8f0">51.1</Cell>
                  <Cell $w={36} $color="#00e8f0">50.31</Cell>
                  <Cell $w={120} $color="#00e800">tfpSessions (330, 900)</Cell>
                  <Cell $w={27} $color="#00e800">N/A</Cell>
                  <Cell $w={27} $color="#00e800">N/A</Cell>
                  <Cell $w={27} $color="#00e800">N/A</Cell>
                  <Cell $w={27} $color="#00e800">N/A</Cell>
                  <Cell $color="#e800e8">TS_Op</Cell>
                </PanelHead>
                <FitButton aria-label="Fit price scale">
                  <svg width="13" height="15" viewBox="0 0 13 15" fill="none">
                    <path d="M0 1h13M0 14h13" stroke="#f0f0e0" />
                    <path d="M1 11h2q3 0 3-4t3-4h3" stroke="#90c0e8" strokeWidth="2" />
                  </svg>
                </FitButton>
                <Frame><PricePlot /></Frame>
                <AxisCell>
                  <AxisPlot
                    y={149}
                    h={463}
                    labels={prices}
                    badges={[
                      { y: 206, text: "51.13", color: "#ff0000" },
                      { y: 247, text: "50.68", color: "#ff00ff" },
                      { y: 270, text: "50.42", color: "#ff00ff" },
                      { y: 286, text: "50.25", color: "#ff0000" },
                      { y: 304, text: "50.05", color: "#00ff00", dark: true },
                      { y: 463, text: "48.29", color: "#ff0000" },
                    ]}
                  />
                </AxisCell>
              </Panel>
              <Splitter />
              <Panel $grow={176}>
                <PanelHead>
                  <Cell $w={45}>Volume</Cell>
                  <Cell $w={33}>1209</Cell>
                </PanelHead>
                <div />
                <Frame><VolumePlot /></Frame>
                <AxisCell><AxisPlot y={639} h={156} labels={volumeLevels} /></AxisCell>
              </Panel>
              <Splitter />
              <Panel $grow={192}>
                <PanelHead>
                  <Cell $w={220} $color="#00e800">LBR_SmartADX (14, 15.0, 30.0, WILDERS)</Cell>
                  <Cell $w={48} $color="#00e800">51.3942</Cell>
                  <Cell $w={21} $color="#808080">15</Cell>
                  <Cell $w={21} $color="#808080">30</Cell>
                </PanelHead>
                <div />
                <Frame><AdxPlot /></Frame>
                <AxisCell>
                  <AxisPlot y={822} h={172} labels={adxLevels} badges={[{ y: 831, text: "51.3942", color: "#00ff00", dark: true }]} />
                </AxisCell>
              </Panel>
              <TimeAxis>
                <Plot domain={{ x: 9, y: 994, w: 1822, h: 16 }} label="Time">
                  {(s) => (
                    <g fill={BROWN}>
                      {times.map(([x, t]) => (
                        <text key={t} x={s.X(x)} y={13}>{t}</text>
                      ))}
                    </g>
                  )}
                </Plot>
              </TimeAxis>
              <BottomBar>
                <BottomButton $w={20} aria-label="Expand">
                  <svg width="18" height="15" viewBox="0 0 18 15">
                    <path d="M.5 2.500h11v12H.5z" fill="#111" stroke="#aaa" />
                    <path d="M3 5l4 3.500l-4 3.500zM8 5h2v7H8z" fill="#ddd" />
                    <path d="M13 3l3 4.500l-3 4.500" stroke="#88b8e0" strokeWidth="2" fill="none" />
                  </svg>
                </BottomButton>
                <BottomButton $w={19} $line aria-label="Zoom in"><Zoom plus /></BottomButton>
                <BottomButton $w={19} $line aria-label="Zoom out"><Zoom /></BottomButton>
                <BottomButton $w={19} $line aria-label="Dollar scale">
                  <svg width="14" height="16" viewBox="0 0 14 16">
                    <path d="M10 3Q4 1 4 4t3 2.500t3 2.500Q10 12 4 10M7 0v12" stroke="#a8d0f0" strokeWidth="1.500" fill="none" />
                    <path d="M0 14h14v1H0z" fill="#f0f0e0" />
                  </svg>
                </BottomButton>
                <BottomButton $w={16} aria-label="Scroll left"><svg width="5" height="10"><path d="M5 0v10L0 5z" fill="#888" /></svg></BottomButton>
                <Track><Thumb /></Track>
                <BottomButton $w={16} aria-label="Scroll right"><svg width="5" height="10"><path d="M0 0v10l5-5z" fill="#888" /></svg></BottomButton>
                <BottomButton $w={19} $line aria-label="Fit width">
                  <svg width="14" height="10" viewBox="0 0 14 10" fill="#f0f0e0"><path d="M5 0v10L0 5zM9 0v10l5-5zM6 2h.8v6H6zM7.500 2h.8v6h-.8z" /></svg>
                </BottomButton>
              </BottomBar>
            </Charts>
            <SideBar>
              {sideTabs.map(([name, h, notch]) => (
                <React.Fragment key={name}>
                  <SideTab $h={h} $active={name === "Chart"}>{name}</SideTab>
                  {notch && <Notch />}
                </React.Fragment>
              ))}
            </SideBar>
          </Body>
        </Workspace>

        <Arrows width="1920" height="400">
          <g fill="#ff0000" stroke="#ff0000" strokeLinejoin="round" strokeLinecap="round">
            <path d="M731 130L674 207" strokeWidth="9" />
            <path d="M664 220L667 203L680 213z" strokeWidth="4" />
            <path d="M1630 238L1568 324" strokeWidth="9" />
            <path d="M1558 337L1561 321L1574 331z" strokeWidth="4" />
          </g>
        </Arrows>
        <Note $x={768} $y={49} $w={411} $h={142}>short NY ORH. Cover 49.70</Note>
        <Note $x={1546} $y={110} $w={266} $h={132}>reshort 49.30 and holding some after covering 48.50 area.</Note>
      </Page>
    </>
  );
}
